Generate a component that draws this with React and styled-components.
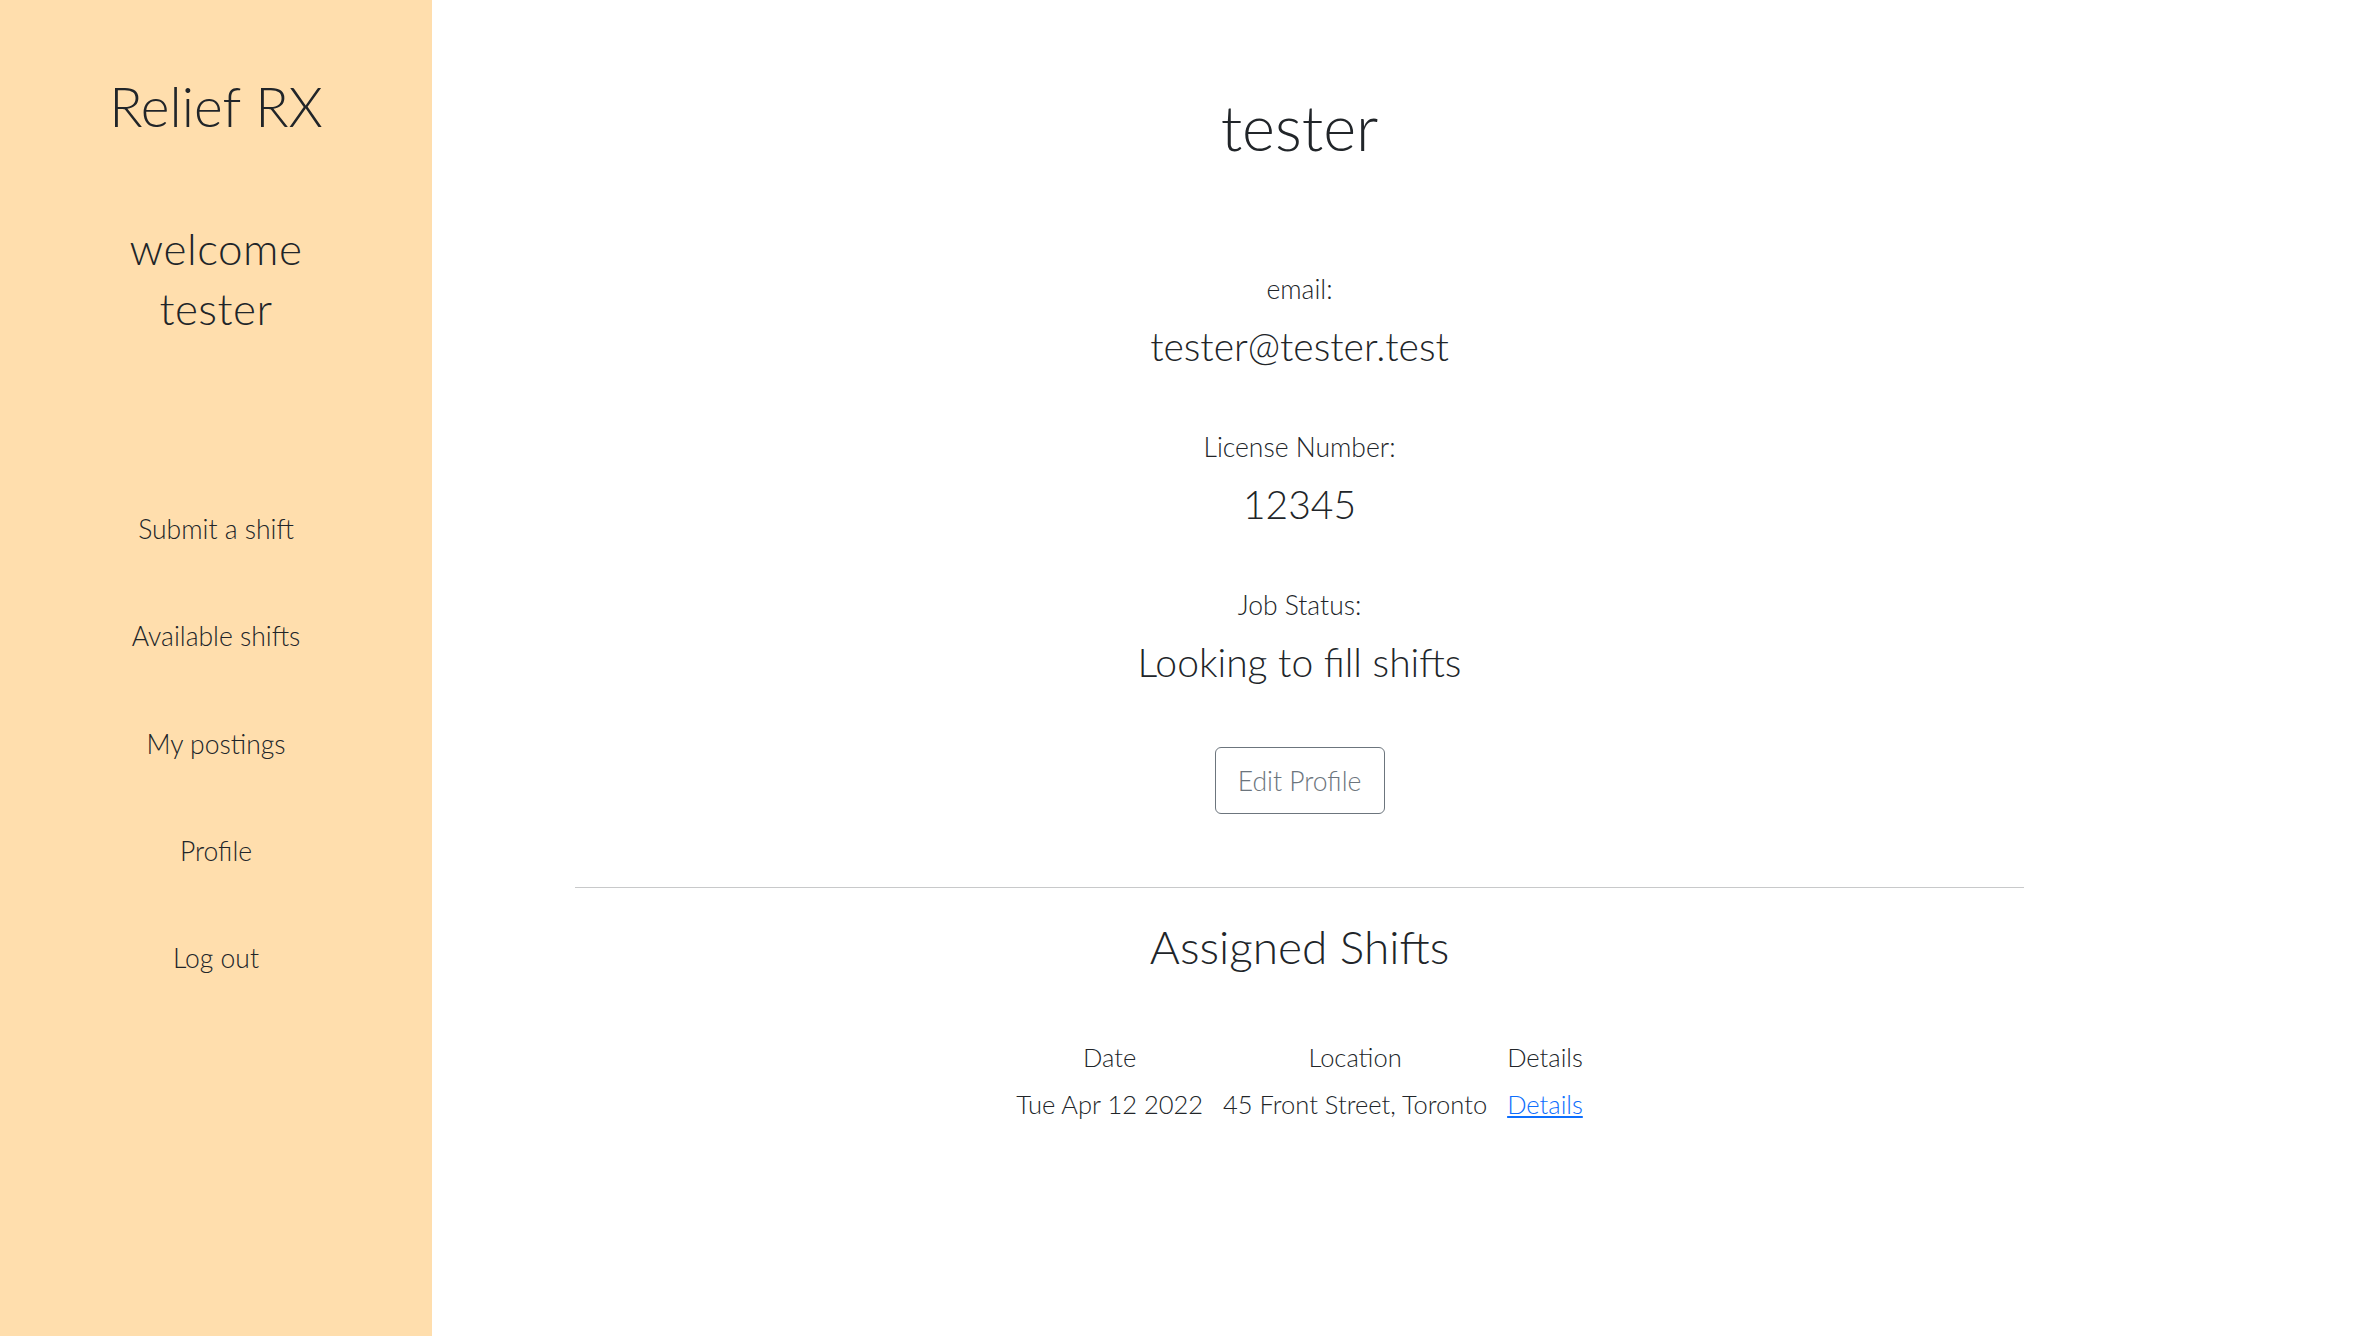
import React from 'react';
import styled, { createGlobalStyle } from 'styled-components';

const GlobalStyle = createGlobalStyle`
  html, body {
    margin: 0;
    padding: 0;
  }
  body {
    font-family: Lato, "Open Sans", sans-serif;
    font-weight: 300;
    color: #212529;
    background: #fff;
  }
`;

const fields = [
  { label: 'email:', value: 'tester@tester.test' },
  { label: 'License Number:', value: '12345' },
  { label: 'Job Status:', value: 'Looking to fill shifts' },
];

const shifts = [
  { date: 'Tue Apr 12 2022', location: '45 Front Street, Toronto' },
];

const navItems = ['Submit a shift', 'Available shifts', 'My postings', 'Profile', 'Log out'];

const App = () => (
  <Page>
    <GlobalStyle />
    <Sidebar>
      <Brand>Relief RX</Brand>
      <Welcome>welcome tester</Welcome>
      <Nav>
        {navItems.map((item) => (
          <NavLink key={item}>{item}</NavLink>
        ))}
      </Nav>
    </Sidebar>
    <Main>
      <UserName>tester</UserName>
      <Fields>
        {fields.map((f) => (
          <Field key={f.label}>
            <FieldLabel>{f.label}</FieldLabel>
            <FieldValue>{f.value}</FieldValue>
          </Field>
        ))}
      </Fields>
      <EditButton type="button">Edit Profile</EditButton>
      <Divider />
      <SectionTitle>Assigned Shifts</SectionTitle>
      <ShiftTable>
        <thead>
          <tr>
            <HeadCell>Date</HeadCell>
            <HeadCell>Location</HeadCell>
            <HeadCell>Details</HeadCell>
          </tr>
        </thead>
        <tbody>
          {shifts.map((s) => (
            <tr key={s.date}>
              <Cell>{s.date}</Cell>
              <Cell>{s.location}</Cell>
              <Cell>
                <DetailsLink href="#">Details</DetailsLink>
              </Cell>
            </tr>
          ))}
        </tbody>
      </ShiftTable>
    </Main>
  </Page>
);
export default App;

const Page = styled.div`
  display: flex;
  min-height: 100vh;
`;

const Sidebar = styled.aside`
  width: 432px;
  flex-shrink: 0;
  background: #ffdead;
  display: flex;
  flex-direction: column;
  align-items: center;
  text-align: center;
  padding-top: 73px;
  box-sizing: border-box;
`;

const Brand = styled.div`
  font-size: 55px;
  line-height: 67px;
`;

const Welcome = styled.div`
  font-size: 44px;
  line-height: 60px;
  letter-spacing: 0.5px;
  max-width: 220px;
  margin-top: 78px;
`;

const Nav = styled.nav`
  display: flex;
  flex-direction: column;
  align-items: center;
  gap: 71.3px;
  margin-top: 173px;
`;

const NavLink = styled.a`
  font-size: 26.5px;
  line-height: 36px;
  color: #212529;
  cursor: pointer;
`;

const Main = styled.main`
  flex: 1;
  padding: 91px 342px 0 143px;
  display: flex;
  flex-direction: column;
  align-items: center;
  text-align: center;
`;

const UserName = styled.h1`
  margin: 0;
  font-weight: 300;
  font-size: 63px;
  line-height: 72px;
`;

const Fields = styled.div`
  display: flex;
  flex-direction: column;
  gap: 59px;
  margin-top: 108px;
`;

const Field = styled.div`
  display: flex;
  flex-direction: column;
  gap: 15px;
`;

const FieldLabel = styled.div`
  font-size: 26.5px;
  line-height: 36px;
`;

const FieldValue = styled.div`
  font-size: 39px;
  line-height: 48px;
`;

const EditButton = styled.button`
  margin-top: 61px;
  width: 170px;
  height: 67px;
  background: transparent;
  border: 1px solid #6c757d;
  border-radius: 6px;
  color: #6c757d;
  font-family: inherit;
  font-weight: 300;
  font-size: 26.5px;
  cursor: pointer;
`;

const Divider = styled.hr`
  align-self: stretch;
  margin: 73px 0 0;
  border: 0;
  border-top: 1px solid #c8c9ca;
`;

const SectionTitle = styled.h2`
  margin: 31px 0 0;
  font-weight: 300;
  font-size: 46px;
  line-height: 56px;
`;

const ShiftTable = styled.table`
  margin-top: 59px;
  border-collapse: collapse;
  font-size: 25.5px;
`;

const HeadCell = styled.th`
  font-weight: 300;
  height: 47px;
  line-height: 47px;
  padding: 0 10px;
`;

const Cell = styled.td`
  height: 47px;
  line-height: 47px;
  padding: 0 10px;
`;

const DetailsLink = styled.a`
  color: #0d6efd;
  text-decoration: underline;
`;
